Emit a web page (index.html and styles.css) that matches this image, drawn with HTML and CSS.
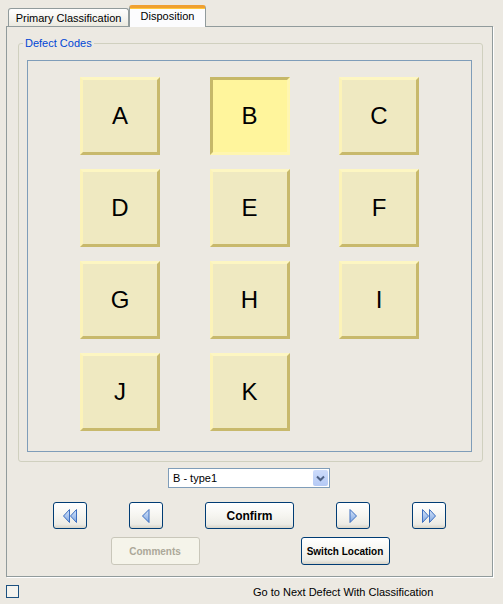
FILE: index.html
```html
<!DOCTYPE html>
<html>
<head>
<meta charset="utf-8">
<link rel="stylesheet" href="styles.css">
</head>
<body>
<div class="tabs">
  <div class="tab">Primary Classification</div>
  <div class="tab active">Disposition</div>
</div>
<div class="panel">
  <fieldset class="group">
    <legend>Defect Codes</legend>
    <div class="codes">
      <div class="grid">
        <button class="code">A</button>
        <button class="code selected">B</button>
        <button class="code">C</button>
        <button class="code">D</button>
        <button class="code">E</button>
        <button class="code">F</button>
        <button class="code">G</button>
        <button class="code">H</button>
        <button class="code">I</button>
        <button class="code">J</button>
        <button class="code">K</button>
      </div>
    </div>
  </fieldset>
  <div class="select">
    <span class="select-text">B - type1</span>
    <span class="select-btn">
      <svg width="9" height="7" viewBox="0 0 9 7"><polyline points="1,1.5 4.5,5 8,1.5" fill="none" stroke="#4d6185" stroke-width="2"/></svg>
    </span>
  </div>
  <div class="nav">
    <button class="xp icon">
      <svg width="14" height="14" viewBox="0 0 14 14"><defs><linearGradient id="g1" x1="0" y1="0" x2="0" y2="1"><stop offset="0" stop-color="#d6e5fb"/><stop offset="1" stop-color="#7fa6e0"/></linearGradient></defs><polygon points="6.5,0.5 0.5,7 6.5,13.5" fill="url(#g1)" stroke="#3d6fc0" stroke-width="1"/><polygon points="13.5,0.5 7.5,7 13.5,13.5" fill="url(#g1)" stroke="#3d6fc0" stroke-width="1"/></svg>
    </button>
    <button class="xp icon">
      <svg width="8" height="14" viewBox="0 0 8 14"><defs><linearGradient id="g2" x1="0" y1="0" x2="0" y2="1"><stop offset="0" stop-color="#d6e5fb"/><stop offset="1" stop-color="#7fa6e0"/></linearGradient></defs><polygon points="7,0.5 0.5,7 7,13.5" fill="url(#g2)" stroke="#3d6fc0" stroke-width="1"/></svg>
    </button>
    <button class="xp confirm">Confirm</button>
    <button class="xp icon">
      <svg width="8" height="14" viewBox="0 0 8 14"><defs><linearGradient id="g3" x1="0" y1="0" x2="0" y2="1"><stop offset="0" stop-color="#d6e5fb"/><stop offset="1" stop-color="#7fa6e0"/></linearGradient></defs><polygon points="1,0.5 7.5,7 1,13.5" fill="url(#g3)" stroke="#3d6fc0" stroke-width="1"/></svg>
    </button>
    <button class="xp icon">
      <svg width="14" height="14" viewBox="0 0 14 14"><defs><linearGradient id="g4" x1="0" y1="0" x2="0" y2="1"><stop offset="0" stop-color="#d6e5fb"/><stop offset="1" stop-color="#7fa6e0"/></linearGradient></defs><polygon points="0.5,0.5 6.5,7 0.5,13.5" fill="url(#g4)" stroke="#3d6fc0" stroke-width="1"/><polygon points="7.5,0.5 13.5,7 7.5,13.5" fill="url(#g4)" stroke="#3d6fc0" stroke-width="1"/></svg>
    </button>
  </div>
  <div class="actions">
    <button class="xp small disabled">Comments</button>
    <button class="xp small">Switch Location</button>
  </div>
</div>
<div class="footer">
  <span class="check"></span>
  <span class="label">Go to Next Defect With Classification</span>
</div>
</body>
</html>
```

FILE: styles.css
```css
html, body {
  margin: 0;
  padding: 0;
  background: #ece9e2;
  font-family: "Liberation Sans", Arial, sans-serif;
  font-size: 11px;
  color: #000;
  width: 503px;
  height: 604px;
  overflow: hidden;
}

.tabs {
  display: flex;
  align-items: flex-end;
  height: 26px;
  padding-left: 8px;
}

.tab {
  box-sizing: border-box;
  height: 18px;
  width: 121px;
  border: 1px solid #919b9c;
  border-bottom: none;
  border-radius: 3px 3px 0 0;
  background: linear-gradient(#fefefe, #f4f3ee 60%, #ebe9df);
  text-align: center;
  line-height: 17px;
  padding-top: 1px;
}

.tab.active {
  position: relative;
  z-index: 1;
  width: 77px;
  height: 22px;
  margin-bottom: -1px;
  background: #fcfcfe;
  border-top: 3px solid #f3a739;
  border-color: #919b9c;
  border-top-color: #f0a030;
  line-height: 17px;
  padding-top: 0;
  box-shadow: inset 0 1px 0 #ffc83c;
}

.panel {
  box-sizing: border-box;
  margin-left: 6px;
  width: 487px;
  height: 551px;
  border: 1px solid #919b9c;
  box-shadow: 1px 1px 0 #ffffff;
  padding: 10px 10px 0 11px;
}

.group {
  box-sizing: border-box;
  width: 465px;
  margin: 0;
  padding: 10px 10px 9px 8px;
  border: 1px solid #d0d0bf;
  border-radius: 3px;
}

.group legend {
  margin-left: -4px;
  padding: 0 2px;
  font-size: 11px;
  line-height: 13px;
  color: #0046d5;
}

.codes {
  box-sizing: border-box;
  height: 392px;
  border: 1px solid #7f9db9;
  padding: 16px 0 0 52px;
}

.grid {
  display: grid;
  grid-template-columns: 80px 80px 80px;
  grid-auto-rows: 78px;
  column-gap: 49.5px;
  row-gap: 14px;
}

.code {
  box-sizing: border-box;
  width: 80px;
  height: 78px;
  margin: 0;
  padding: 0;
  border: 3px solid;
  border-color: #fdf6c2 #c8b96c #c8b96c #fcf3b8;
  background: #efe9c1;
  font-family: "Liberation Sans", Arial, sans-serif;
  font-size: 24px;
  color: #000;
}

.code.selected {
  border-color: #c6b868 #fff6b0 #fff6b0 #c6b868;
  background: #fff59c;
}

.select {
  box-sizing: border-box;
  display: flex;
  align-items: stretch;
  width: 162px;
  height: 20px;
  margin: 6px 0 0 150px;
  border: 1px solid #7f9db9;
  background: #ffffff;
  padding: 1px;
}

.select-text {
  flex: 1;
  padding-left: 3px;
  line-height: 16px;
  font-size: 11px;
}

.select-btn {
  width: 15px;
  display: flex;
  align-items: center;
  justify-content: center;
  background: linear-gradient(#cddcfb, #b4c9f5);
  border-radius: 2px;
}

.nav {
  display: flex;
  justify-content: center;
  gap: 42px;
  margin-top: 14px;
  padding-right: 1px;
}

.actions {
  display: flex;
  justify-content: center;
  gap: 101px;
  margin-top: 8px;
}

.xp {
  box-sizing: border-box;
  margin: 0;
  padding: 0;
  border: 1px solid #003c74;
  border-radius: 3px;
  background: linear-gradient(#ffffff, #f6f5f0 50%, #ecebe5 85%, #d8d4c8);
  font-family: "Liberation Sans", Arial, sans-serif;
  color: #000;
  display: flex;
  align-items: center;
  justify-content: center;
}

.xp.icon {
  width: 34px;
  height: 27px;
}

.xp.confirm {
  width: 89px;
  height: 27px;
  font-size: 12px;
  font-weight: bold;
}

.xp.small {
  width: 89px;
  height: 28px;
  font-size: 10px;
  font-weight: bold;
}

.xp.disabled {
  border-color: #c9c7ba;
  color: #aca899;
  background: #f5f4ea;
}

.footer {
  display: flex;
  align-items: center;
  padding-top: 8px;
}

.check {
  box-sizing: border-box;
  width: 13px;
  height: 13px;
  margin-left: 6px;
  border: 1px solid #1c5180;
  background: #f4f3ee;
}

.label {
  margin-left: 234px;
  font-size: 11px;
}
```
